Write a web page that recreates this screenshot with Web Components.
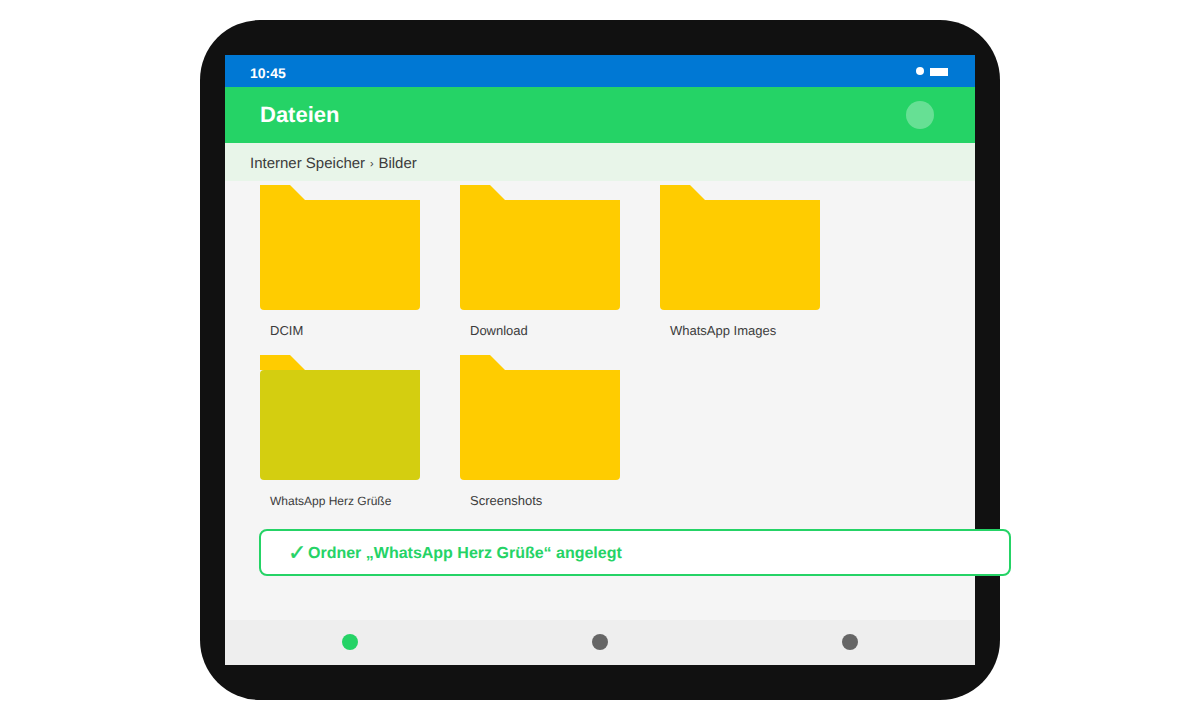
<!DOCTYPE html>
<html lang="de">
<head>
<meta charset="utf-8">
<title>Dateien</title>
<style>
  html, body { margin: 0; height: 100%; background: #fff; }
  body { font-family: "Liberation Sans", Arial, sans-serif; text-rendering: geometricPrecision; display: flex; justify-content: center; padding-top: 20px; box-sizing: border-box; }
</style>
</head>
<body>
<tablet-frame>
  <status-bar time="10:45"></status-bar>
  <app-bar title="Dateien"></app-bar>
  <bread-crumb><span>Interner Speicher</span><span>Bilder</span></bread-crumb>
  <file-browser>
    <folder-item>DCIM</folder-item>
    <folder-item>Download</folder-item>
    <folder-item>WhatsApp Images</folder-item>
    <folder-item small highlighted>WhatsApp Herz Grüße</folder-item>
    <folder-item>Screenshots</folder-item>
    <toast-message slot="overlay">Ordner „WhatsApp Herz Grüße“ angelegt</toast-message>
  </file-browser>
  <nav-bar></nav-bar>
</tablet-frame>

<script>
class TabletFrame extends HTMLElement {
  constructor() {
    super();
    this.attachShadow({ mode: 'open' });
    this.shadowRoot.innerHTML = `
      <style>
        :host {
          display: block;
          width: 800px;
          height: 680px;
          box-sizing: border-box;
          padding: 35px 25px;
          background: #111;
          border-radius: 60px;
        }
        #screen {
          height: 100%;
          display: flex;
          flex-direction: column;
          background: #f5f5f5;
        }
      </style>
      <div id="screen"><slot></slot></div>
    `;
  }
}

class StatusBar extends HTMLElement {
  constructor() {
    super();
    this.attachShadow({ mode: 'open' });
    this.shadowRoot.innerHTML = `
      <style>
        :host {
          display: flex;
          flex: none;
          height: 32px;
          box-sizing: border-box;
          padding: 0 27px 0 25px;
          align-items: center;
          justify-content: space-between;
          background: #0078d4;
          color: #fff;
        }
        #time { font-size: 14px; font-weight: 700; position: relative; top: 2px; }
        #icons { display: flex; gap: 6px; }
        #dot { width: 8px; height: 8px; border-radius: 50%; background: #fff; }
        #battery { width: 18px; height: 8px; margin-top: 1px; background: #fff; }
      </style>
      <span id="time"></span>
      <div id="icons"><div id="dot"></div><div id="battery"></div></div>
    `;
    this.shadowRoot.querySelector('#time').textContent = this.getAttribute('time');
  }
}

class AppBar extends HTMLElement {
  constructor() {
    super();
    this.attachShadow({ mode: 'open' });
    this.shadowRoot.innerHTML = `
      <style>
        :host {
          display: flex;
          flex: none;
          height: 56px;
          box-sizing: border-box;
          padding: 0 41px 0 35px;
          align-items: center;
          justify-content: space-between;
          background: #25d366;
          color: #fff;
        }
        h1 { margin: 0; font-size: 22px; font-weight: 700; }
        #avatar { width: 28px; height: 28px; border-radius: 50%; background: rgba(255,255,255,0.3); }
      </style>
      <h1></h1>
      <div id="avatar"></div>
    `;
    this.shadowRoot.querySelector('h1').textContent = this.getAttribute('title');
  }
}

class BreadCrumb extends HTMLElement {
  constructor() {
    super();
    this.attachShadow({ mode: 'open' });
    this.shadowRoot.innerHTML = `
      <style>
        :host {
          display: flex;
          flex: none;
          height: 38px;
          box-sizing: border-box;
          padding: 2px 25px 0;
          align-items: center;
          background: #e8f5e9;
          color: #3c3c3c;
          font-size: 15px;
        }
        /* small separator, the fixed width keeps the next crumb in place */
        ::slotted(span:not(:last-child))::after {
          content: "›";
          display: inline-block;
          width: 13.3px;
          text-align: center;
          font-size: 11px;
          vertical-align: 1px;
        }
      </style>
      <slot></slot>
    `;
  }
}

class FileBrowser extends HTMLElement {
  constructor() {
    super();
    this.attachShadow({ mode: 'open' });
    this.shadowRoot.innerHTML = `
      <style>
        :host {
          display: block;
          flex: 1;
          position: relative;
          box-sizing: border-box;
          padding: 4px 35px 0;
        }
        #grid {
          display: grid;
          grid-template-columns: repeat(3, 160px);
          grid-auto-rows: 170px;
          column-gap: 40px;
        }
      </style>
      <div id="grid"><slot></slot></div>
      <slot name="overlay"></slot>
    `;
  }
}

class FolderItem extends HTMLElement {
  constructor() {
    super();
    this.attachShadow({ mode: 'open' });
    this.shadowRoot.innerHTML = `
      <style>
        :host { display: block; color: #3c3c3c; font-size: 13px; }
        :host([small]) { font-size: 12px; }
        #icon { height: 125px; }
        #tab {
          height: 15px;
          width: 45px;
          background: #ffcc00;
          clip-path: polygon(0 0, 30px 0, 45px 15px, 0 15px);
        }
        #body {
          height: 110px;
          background: #ffcc00;
          border-radius: 0 0 4px 4px;
        }
        :host([highlighted]) #body { background: #d4ce10; border-radius: 4px 0 4px 4px; }
        #label { padding: 13px 10px 0; line-height: 16px; }
      </style>
      <div id="icon"><div id="tab"></div><div id="body"></div></div>
      <div id="label"><slot></slot></div>
    `;
  }
}

class ToastMessage extends HTMLElement {
  constructor() {
    super();
    this.attachShadow({ mode: 'open' });
    this.shadowRoot.innerHTML = `
      <style>
        :host {
          position: absolute;
          left: 34px;
          top: 348px;
          width: 752px;
          height: 47px;
          box-sizing: border-box;
          display: flex;
          align-items: center;
          gap: 3px;
          padding: 2px 0 0 27px;
          background: #fff;
          border: 2px solid #25d366;
          border-radius: 8px;
          color: #25d366;
          font-size: 16px;
          font-weight: 700;
        }
        #check {
          font-family: "DejaVu Sans", sans-serif;
          font-size: 22px;
          font-weight: 400;
          -webkit-text-stroke: 0.4px #25d366;
          width: 17px;
          margin-top: -1px;
        }
      </style>
      <span id="check">✓</span><span><slot></slot></span>
    `;
  }
}

class NavBar extends HTMLElement {
  constructor() {
    super();
    this.attachShadow({ mode: 'open' });
    this.shadowRoot.innerHTML = `
      <style>
        :host {
          display: grid;
          flex: none;
          height: 45px;
          grid-template-columns: repeat(3, 1fr);
          place-items: center;
          background: #eeeeee;
        }
        div { width: 16px; height: 16px; border-radius: 50%; background: #666; position: relative; top: -1px; }
        div.active { background: #25d366; }
      </style>
      <div class="active"></div><div></div><div></div>
    `;
  }
}

customElements.define('tablet-frame', TabletFrame);
customElements.define('status-bar', StatusBar);
customElements.define('app-bar', AppBar);
customElements.define('bread-crumb', BreadCrumb);
customElements.define('file-browser', FileBrowser);
customElements.define('folder-item', FolderItem);
customElements.define('toast-message', ToastMessage);
customElements.define('nav-bar', NavBar);
</script>
</body>
</html>
